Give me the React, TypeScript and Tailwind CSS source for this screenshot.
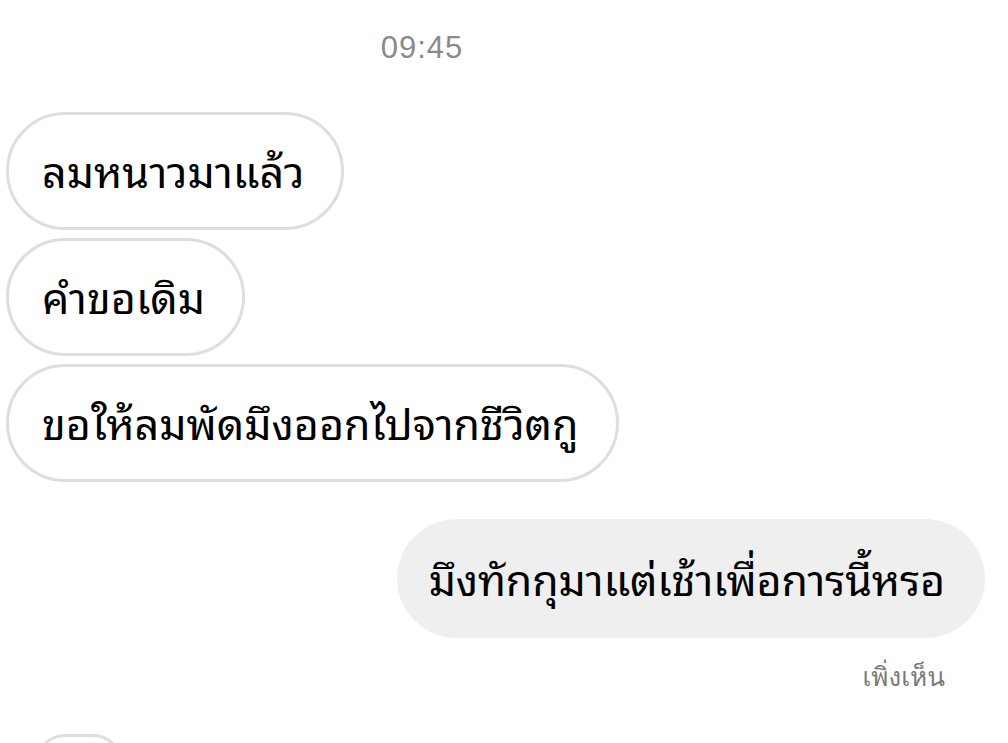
const Incoming = ({ text }: { text: string }) => (
  <div className="self-start h-[118px] flex items-center rounded-full border-[3px] border-[#dedede] bg-white pl-[33px] pr-[37px] pb-[5px]">
    <span className="text-[43px] leading-none text-black">{text}</span>
  </div>
)

export default function App() {
  return (
    <div className="w-[1008px] h-[743px] overflow-hidden bg-white font-['Noto_Sans_Thai_Looped','Loma',sans-serif]">
      <div className="flex justify-center pr-[164px] pt-[32px]">
        <span className="font-['Liberation_Sans',sans-serif] text-[31px] leading-none text-[#8a8a8a] tracking-[1px]">
          09:45
        </span>
      </div>
      <div className="flex flex-col gap-[8px] pl-[6px] mt-[49px]">
        <Incoming text="ลมหนาวมาแล้ว" />
        <Incoming text="คำขอเดิม" />
        <Incoming text="ขอให้ลมพัดมึงออกไปจากชีวิตกู" />
      </div>
      <div className="flex justify-end pr-[23px] mt-[37px]">
        <div className="h-[119px] flex items-center rounded-full bg-[#efefef] pl-[32px] pr-[40px] pb-[5px]">
          <span className="text-[43px] leading-none text-black tracking-[-0.2px]">มึงทักกุมาแต่เช้าเพื่อการนี้หรอ</span>
        </div>
      </div>
      <div className="flex justify-end pr-[63px] mt-[26px]">
        <span className="font-['Loma',sans-serif] text-[26px] leading-none text-[#7a7a7a]">เพิ่งเห็น</span>
      </div>
      <div className="pl-[35px] mt-[44px]">
        <div className="w-[88px] h-[60px] rounded-full border-[3px] border-[#dedede]" />
      </div>
    </div>
  )
}
